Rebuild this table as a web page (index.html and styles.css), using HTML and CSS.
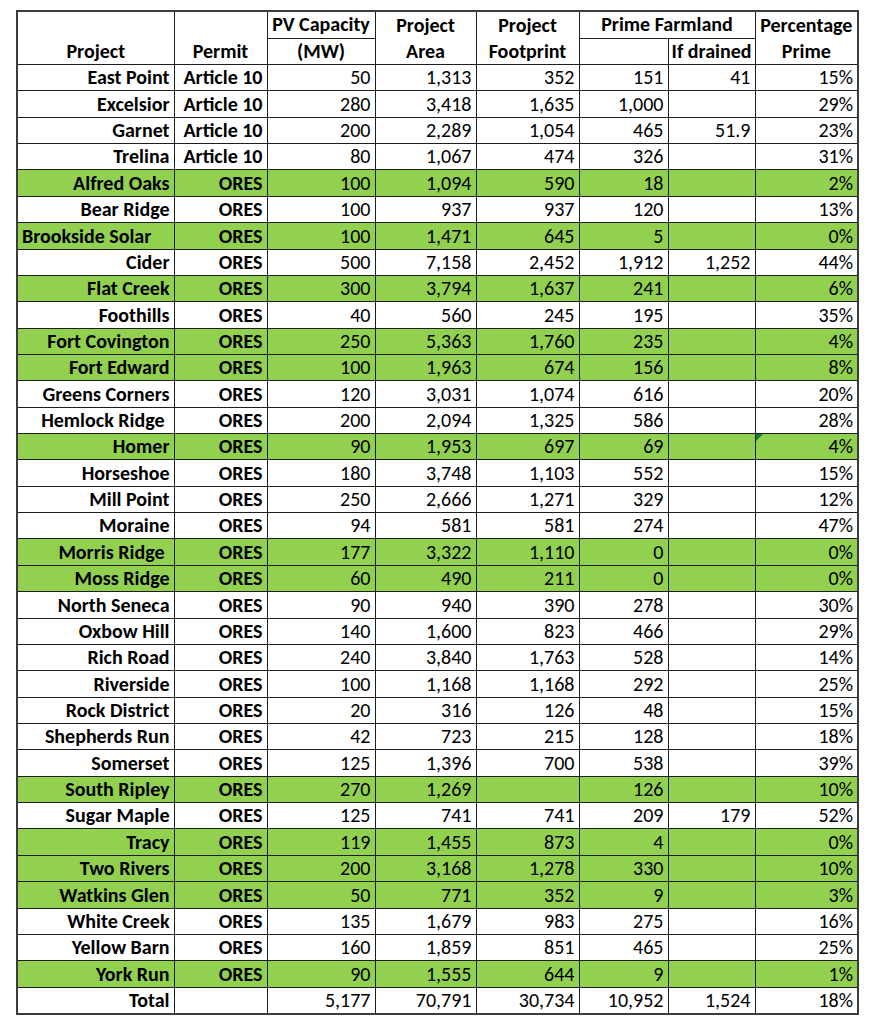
FILE: index.html
```html
<!DOCTYPE html>
<html>
<head>
<meta charset="utf-8">
<link rel="stylesheet" href="styles.css">
</head>
<body>
<table class="sheet">
<colgroup>
<col class="c1"><col class="c2"><col class="c3"><col class="c4"><col class="c5"><col class="c6"><col class="c7"><col class="c8">
</colgroup>
<thead>
<tr class="h1">
<th rowspan="2" class="bottom">Project</th>
<th rowspan="2" class="bottom">Permit</th>
<th class="sub">PV Capacity</th>
<th rowspan="2" class="two">Project<br>Area</th>
<th rowspan="2" class="two">Project<br>Footprint</th>
<th colspan="2" class="sub">Prime Farmland</th>
<th rowspan="2" class="two">Percentage<br>Prime</th>
</tr>
<tr class="h2">
<th>(MW)</th>
<th></th>
<th>If drained</th>
</tr>
</thead>
<tbody>
<tr><td class="n">East Point</td><td class="p">Article 10</td><td>50</td><td>1,313</td><td>352</td><td>151</td><td>41</td><td>15%</td></tr>
<tr><td class="n">Excelsior</td><td class="p">Article 10</td><td>280</td><td>3,418</td><td>1,635</td><td>1,000</td><td></td><td>29%</td></tr>
<tr><td class="n">Garnet</td><td class="p">Article 10</td><td>200</td><td>2,289</td><td>1,054</td><td>465</td><td>51.9</td><td>23%</td></tr>
<tr><td class="n">Trelina</td><td class="p">Article 10</td><td>80</td><td>1,067</td><td>474</td><td>326</td><td></td><td>31%</td></tr>
<tr class="g"><td class="n">Alfred Oaks</td><td class="p">ORES</td><td>100</td><td>1,094</td><td>590</td><td>18</td><td></td><td>2%</td></tr>
<tr><td class="n">Bear Ridge</td><td class="p">ORES</td><td>100</td><td>937</td><td>937</td><td>120</td><td></td><td>13%</td></tr>
<tr class="g"><td class="n left">Brookside Solar</td><td class="p">ORES</td><td>100</td><td>1,471</td><td>645</td><td>5</td><td></td><td>0%</td></tr>
<tr><td class="n">Cider</td><td class="p">ORES</td><td>500</td><td>7,158</td><td>2,452</td><td>1,912</td><td>1,252</td><td>44%</td></tr>
<tr class="g"><td class="n">Flat Creek</td><td class="p">ORES</td><td>300</td><td>3,794</td><td>1,637</td><td>241</td><td></td><td>6%</td></tr>
<tr><td class="n">Foothills</td><td class="p">ORES</td><td>40</td><td>560</td><td>245</td><td>195</td><td></td><td>35%</td></tr>
<tr class="g"><td class="n">Fort Covington</td><td class="p">ORES</td><td>250</td><td>5,363</td><td>1,760</td><td>235</td><td></td><td>4%</td></tr>
<tr class="g"><td class="n">Fort Edward</td><td class="p">ORES</td><td>100</td><td>1,963</td><td>674</td><td>156</td><td></td><td>8%</td></tr>
<tr><td class="n">Greens Corners</td><td class="p">ORES</td><td>120</td><td>3,031</td><td>1,074</td><td>616</td><td></td><td>20%</td></tr>
<tr><td class="n sp">Hemlock Ridge</td><td class="p">ORES</td><td>200</td><td>2,094</td><td>1,325</td><td>586</td><td></td><td>28%</td></tr>
<tr class="g"><td class="n">Homer</td><td class="p">ORES</td><td>90</td><td>1,953</td><td>697</td><td>69</td><td></td><td class="flag">4%</td></tr>
<tr><td class="n">Horseshoe</td><td class="p">ORES</td><td>180</td><td>3,748</td><td>1,103</td><td>552</td><td></td><td>15%</td></tr>
<tr><td class="n">Mill Point</td><td class="p">ORES</td><td>250</td><td>2,666</td><td>1,271</td><td>329</td><td></td><td>12%</td></tr>
<tr><td class="n">Moraine</td><td class="p">ORES</td><td>94</td><td>581</td><td>581</td><td>274</td><td></td><td>47%</td></tr>
<tr class="g"><td class="n sp">Morris Ridge</td><td class="p">ORES</td><td>177</td><td>3,322</td><td>1,110</td><td>0</td><td></td><td>0%</td></tr>
<tr class="g"><td class="n">Moss Ridge</td><td class="p">ORES</td><td>60</td><td>490</td><td>211</td><td>0</td><td></td><td>0%</td></tr>
<tr><td class="n">North Seneca</td><td class="p">ORES</td><td>90</td><td>940</td><td>390</td><td>278</td><td></td><td>30%</td></tr>
<tr><td class="n">Oxbow Hill</td><td class="p">ORES</td><td>140</td><td>1,600</td><td>823</td><td>466</td><td></td><td>29%</td></tr>
<tr><td class="n">Rich Road</td><td class="p">ORES</td><td>240</td><td>3,840</td><td>1,763</td><td>528</td><td></td><td>14%</td></tr>
<tr><td class="n">Riverside</td><td class="p">ORES</td><td>100</td><td>1,168</td><td>1,168</td><td>292</td><td></td><td>25%</td></tr>
<tr><td class="n">Rock District</td><td class="p">ORES</td><td>20</td><td>316</td><td>126</td><td>48</td><td></td><td>15%</td></tr>
<tr><td class="n">Shepherds Run</td><td class="p">ORES</td><td>42</td><td>723</td><td>215</td><td>128</td><td></td><td>18%</td></tr>
<tr><td class="n">Somerset</td><td class="p">ORES</td><td>125</td><td>1,396</td><td>700</td><td>538</td><td></td><td>39%</td></tr>
<tr class="g"><td class="n">South Ripley</td><td class="p">ORES</td><td>270</td><td>1,269</td><td></td><td>126</td><td></td><td>10%</td></tr>
<tr><td class="n">Sugar Maple</td><td class="p">ORES</td><td>125</td><td>741</td><td>741</td><td>209</td><td>179</td><td>52%</td></tr>
<tr class="g"><td class="n">Tracy</td><td class="p">ORES</td><td>119</td><td>1,455</td><td>873</td><td>4</td><td></td><td>0%</td></tr>
<tr class="g"><td class="n">Two Rivers</td><td class="p">ORES</td><td>200</td><td>3,168</td><td>1,278</td><td>330</td><td></td><td>10%</td></tr>
<tr class="g"><td class="n">Watkins Glen</td><td class="p">ORES</td><td>50</td><td>771</td><td>352</td><td>9</td><td></td><td>3%</td></tr>
<tr><td class="n">White Creek</td><td class="p">ORES</td><td>135</td><td>1,679</td><td>983</td><td>275</td><td></td><td>16%</td></tr>
<tr><td class="n">Yellow Barn</td><td class="p">ORES</td><td>160</td><td>1,859</td><td>851</td><td>465</td><td></td><td>25%</td></tr>
<tr class="g"><td class="n">York Run</td><td class="p">ORES</td><td>90</td><td>1,555</td><td>644</td><td>9</td><td></td><td>1%</td></tr>
<tr><td class="n">Total</td><td class="p"></td><td>5,177</td><td>70,791</td><td>30,734</td><td>10,952</td><td>1,524</td><td>18%</td></tr>
</tbody>
</table>
</body>
</html>
```

FILE: styles.css
```css
html, body {
  margin: 0;
  padding: 0;
  background: #ffffff;
}
body {
  padding: 10px 0 0 16px;
}
.sheet {
  border-collapse: collapse;
  table-layout: fixed;
  width: 841px;
  font-family: Carlito, Lato, "Liberation Sans", sans-serif;
  font-size: 20px;
  color: #000000;
  border: 2px solid #3c3c3c;
}
.c1 { width: 157px; }
.c2 { width: 93px; }
.c3 { width: 108px; }
.c4 { width: 101px; }
.c5 { width: 103px; }
.c6 { width: 89px; }
.c7 { width: 87px; }
.c8 { width: 103px; }
.sheet th,
.sheet td {
  border: 1px solid #1e1e1e;
  padding: 0 4px;
  white-space: nowrap;
  overflow: visible;
}
.sheet th {
  font-weight: bold;
  text-align: center;
  height: 25px;
  line-height: 25px;
  padding: 0 2px;
}
.sheet th.bottom {
  vertical-align: bottom;
}
.sheet th.two {
  line-height: 26px;
  vertical-align: middle;
}
.sheet td {
  text-align: right;
  height: 25.36px;
  line-height: 25px;
  vertical-align: bottom;
}
.sheet td.n,
.sheet td.p {
  font-weight: bold;
}
.sheet td.left {
  text-align: left;
}
.sheet td.sp {
  padding-right: 9px;
}
.g td {
  background: #92d050;
}
.sheet td.flag {
  position: relative;
}
.sheet td.flag::before {
  content: "";
  position: absolute;
  left: 0;
  top: 0;
  border-top: 7px solid #117a2c;
  border-right: 7px solid transparent;
}
```
